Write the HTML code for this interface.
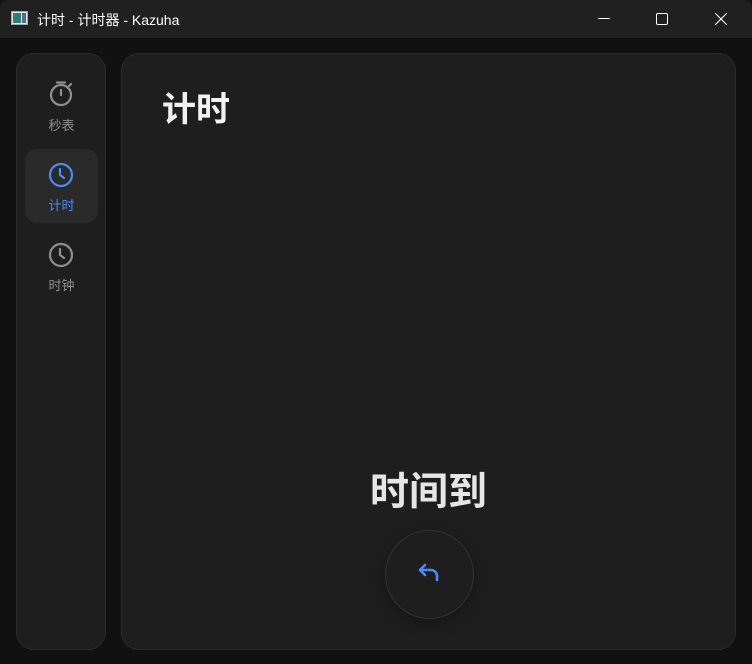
<!DOCTYPE html>
<html><head><meta charset="utf-8"><style>
*{margin:0;padding:0;box-sizing:border-box}
body{width:752px;height:664px;background:#111111;font-family:"Liberation Sans","Noto Sans CJK SC",sans-serif;position:relative;overflow:hidden}
.title{position:absolute;left:0;top:0;width:752px;height:38px;background:#202020;border-radius:8px 8px 0 0}
.title .t{position:absolute;left:37px;top:10px;font-size:14px;color:#fff}
.side{position:absolute;left:16px;top:53px;width:90px;height:597px;background:#1e1e1e;border:1px solid #2c2c2c;border-radius:18px}
.main{position:absolute;left:121px;top:53px;width:615px;height:597px;background:#1e1e1e;border:1px solid #2c2c2c;border-radius:18px}
.item{position:absolute;left:8px;width:73px;height:74px;text-align:center;font-size:13px;color:#8f8f8f}
.item svg{position:absolute;left:23px;top:11px}
.item span{position:absolute;left:0;right:0;top:46px}
</style></head><body>
<div class="title">
<svg style="position:absolute;left:11px;top:11px" width="17" height="14"><rect x="0.5" y="0.5" width="16" height="13" fill="#dfe6ea" stroke="#aaa"/><rect x="2" y="2" width="8" height="10" fill="#2f7d7a"/><rect x="11" y="2" width="4" height="10" fill="#5a6b84"/></svg>
<div class="t">计时 - 计时器 - Kazuha</div>
<svg style="position:absolute;left:598px;top:18px" width="12" height="2"><rect width="12" height="1" fill="#fff"/></svg>
<svg style="position:absolute;left:656px;top:13px" width="12" height="12"><rect x="0.5" y="0.5" width="11" height="11" rx="1.5" fill="none" stroke="#fff"/></svg>
<svg style="position:absolute;left:715px;top:13px" width="12" height="12"><path d="M0 0L12 12M12 0L0 12" stroke="#fff" stroke-width="1.1"/></svg>
</div>
<div class="side">
<div class="item" style="top:15px"><svg width="26" height="28" viewBox="0 0 26 28"><circle cx="13" cy="15" r="10" fill="none" stroke="#8f8f8f" stroke-width="2.2"/><path d="M9 2.5h8M13 10v5M21 6l2-2" stroke="#8f8f8f" stroke-width="2.2" stroke-linecap="round"/></svg><span>秒表</span></div>
<div class="item" style="top:95px;background:#2a2a2a;border-radius:12px;color:#4b8bf5"><svg width="26" height="28" viewBox="0 0 26 28"><circle cx="13" cy="15" r="11" fill="none" stroke="#4b8bf5" stroke-width="2.2"/><path d="M12 9v6l4 3" fill="none" stroke="#4b8bf5" stroke-width="2.2" stroke-linecap="round"/></svg><span>计时</span></div>
<div class="item" style="top:175px"><svg width="26" height="28" viewBox="0 0 26 28"><circle cx="13" cy="15" r="11" fill="none" stroke="#8f8f8f" stroke-width="2.2"/><path d="M12 9v6l4 3" fill="none" stroke="#8f8f8f" stroke-width="2.2" stroke-linecap="round"/></svg><span>时钟</span></div>
</div>
<div class="main">
<div style="position:absolute;left:40px;top:28px;font-size:34px;font-weight:bold;color:#f2f2f2">计时</div>
<div style="position:absolute;left:0;right:0;top:407px;text-align:center;font-size:39px;font-weight:bold;color:#e6e6e6">时间到</div>
<div style="position:absolute;left:263px;top:476px;width:89px;height:89px;border-radius:50%;background:#1e1e1e;border:1px solid #333;box-shadow:0 4px 14px rgba(0,0,0,0.35)">
<svg style="position:absolute;left:31px;top:30px" width="26" height="26" viewBox="0 0 26 26"><path d="M8 4L3 9l5 5M3 9h11a6 6 0 0 1 6 6v4" fill="none" stroke="#4b8bf5" stroke-width="2.6" stroke-linecap="round" stroke-linejoin="round"/></svg>
</div>
</div>
</body></html>
